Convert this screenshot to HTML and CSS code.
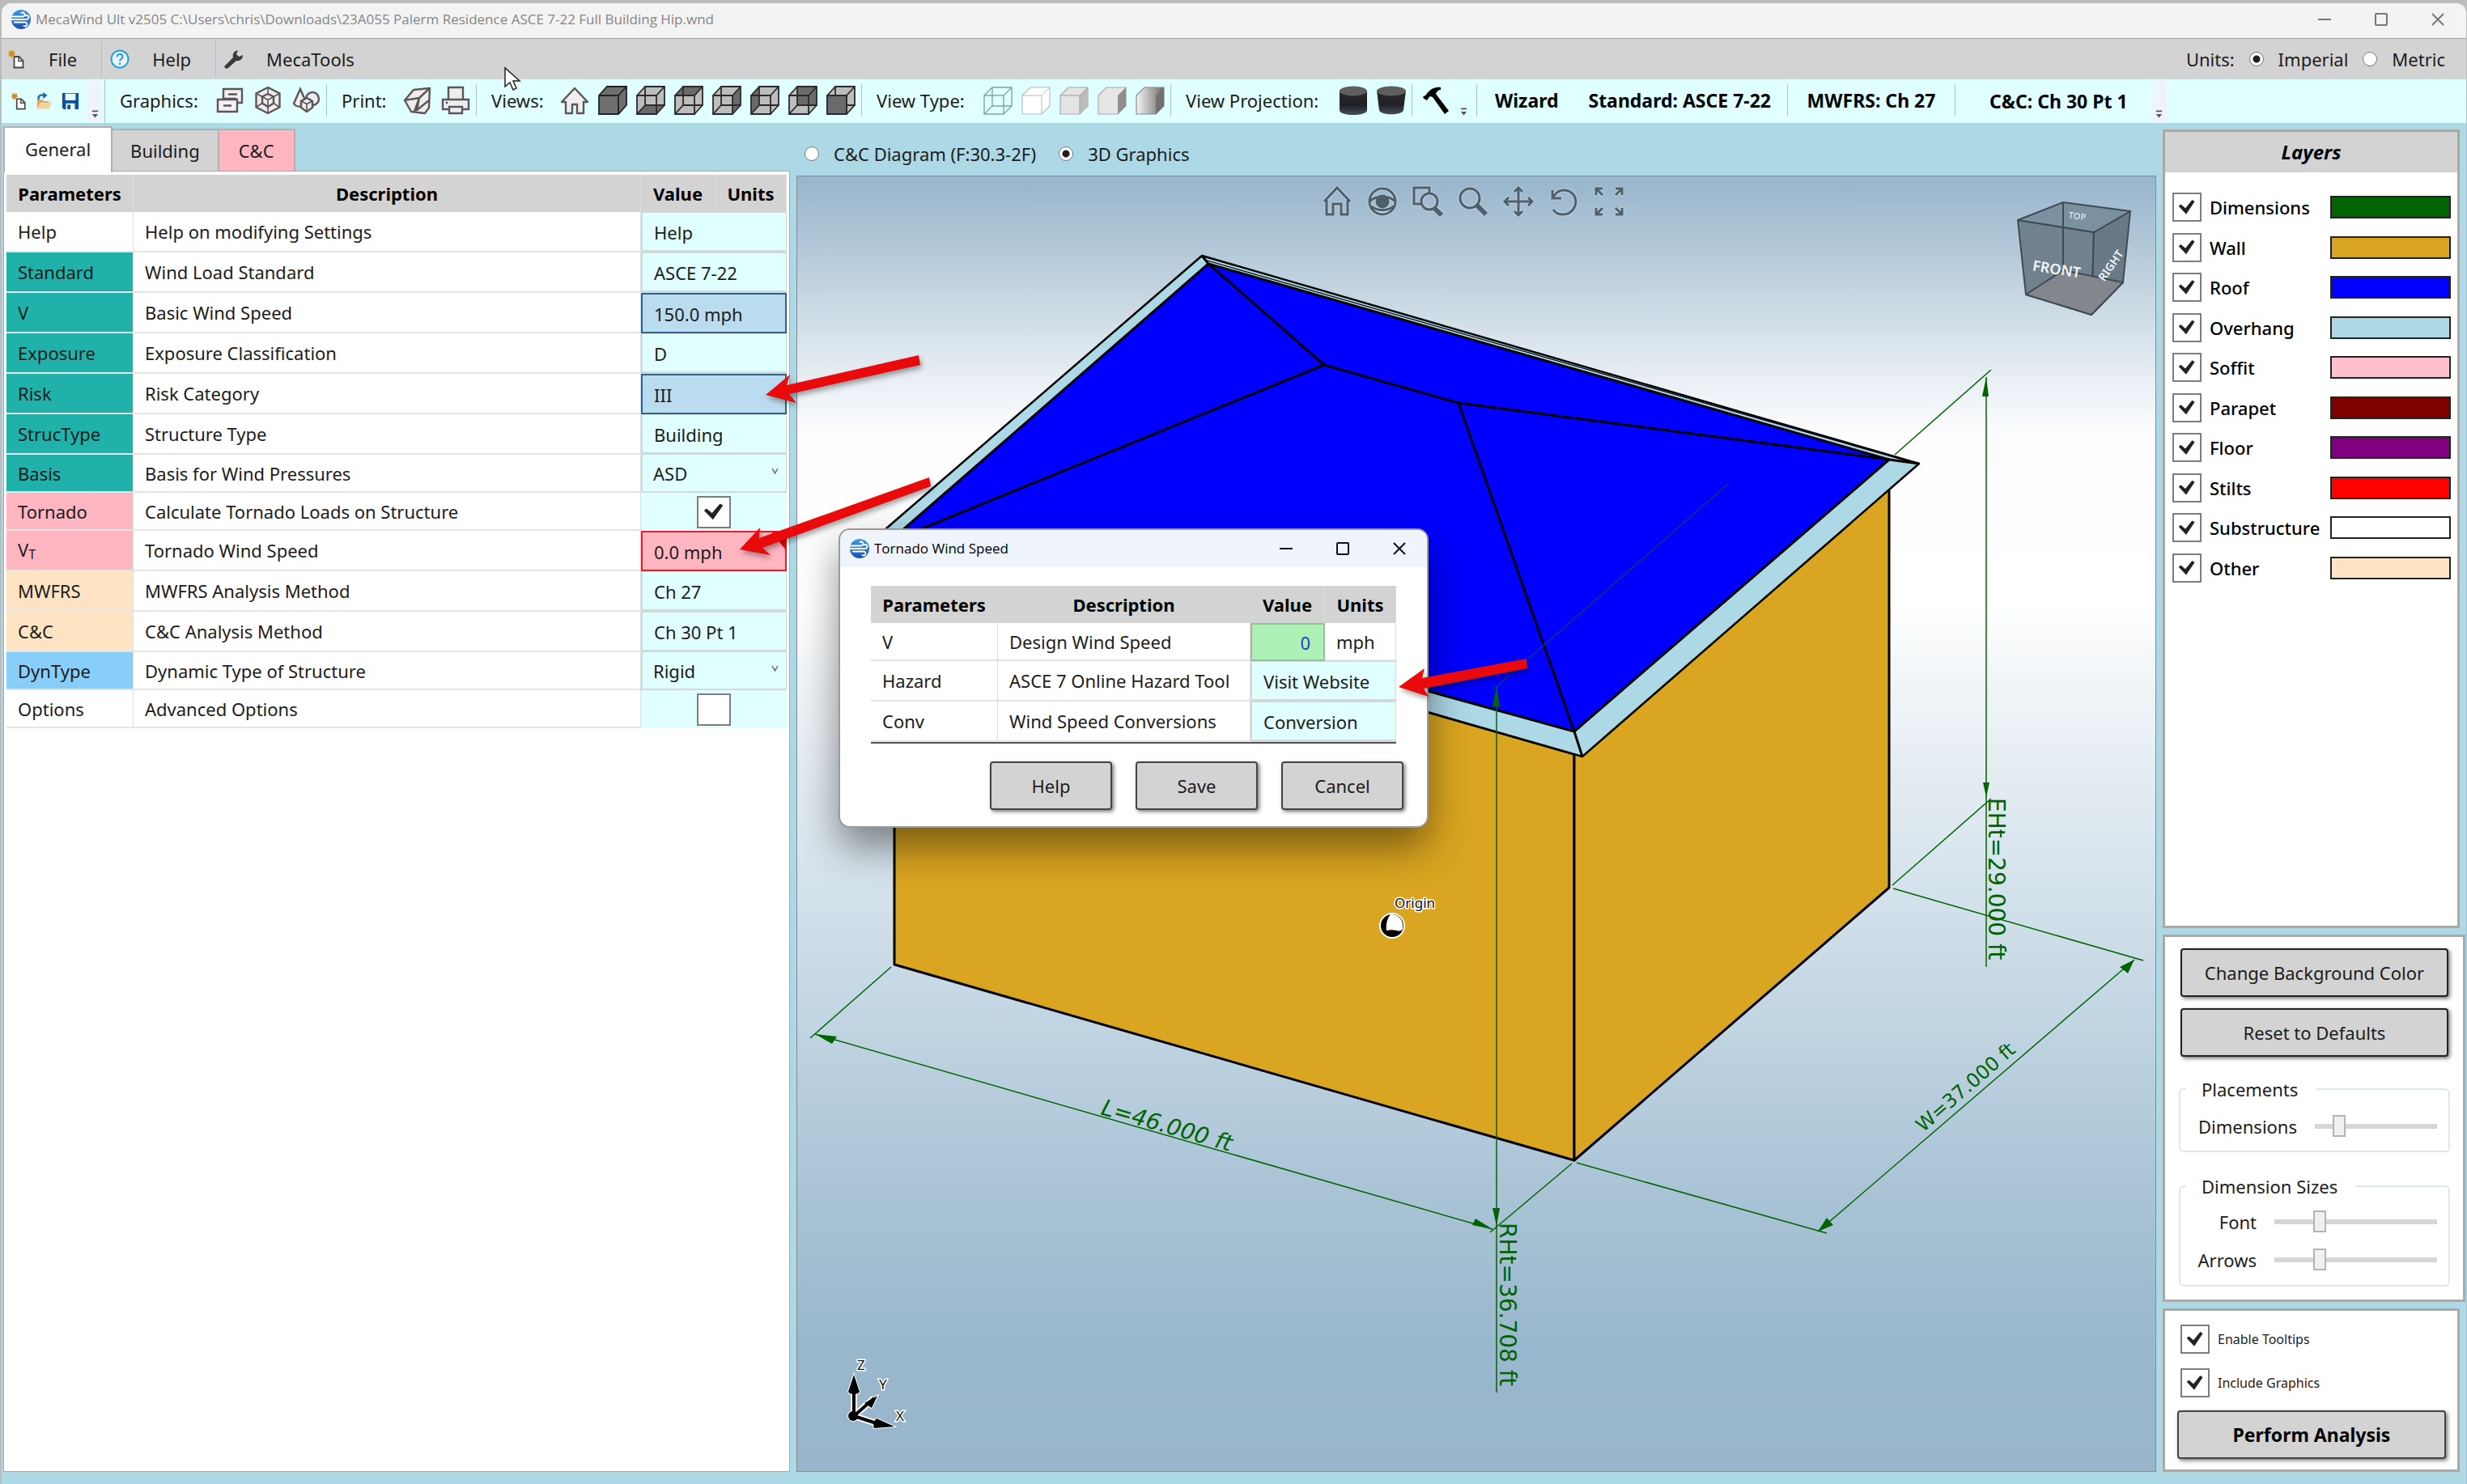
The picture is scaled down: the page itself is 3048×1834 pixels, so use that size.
FILE: index.html
```html
<!DOCTYPE html>
<html lang="en">
<head>
<meta charset="utf-8">
<title>MecaWind Ult v2505</title>
<link rel="stylesheet" href="styles.css">
</head>
<body>
<svg class="defs" aria-hidden="true">
  <defs>
    <linearGradient id="g-brand" x1="0" y1="0" x2="0" y2="1"><stop offset="0" stop-color="#3d9be0"/><stop offset="1" stop-color="#1c50b4"/></linearGradient>
    <linearGradient id="g-shade" x1="0" y1="0" x2="1" y2="0"><stop offset="0" stop-color="#f4f4f4"/><stop offset="1" stop-color="#6c6c6c"/></linearGradient>
    <linearGradient id="g-cyl" x1="0" y1="0" x2="0" y2="1"><stop offset="0" stop-color="#2a2a2a"/><stop offset=".6" stop-color="#1f2124"/><stop offset="1" stop-color="#45505b"/></linearGradient>
    <symbol id="brand" viewBox="0 0 24 24">
      <circle cx="12" cy="12" r="12" fill="url(#g-brand)"/>
      <path d="M0 8.500h14a2.500 2.500 0 1 0-2-4M0 12h19a2.500 2.500 0 1 0-2-4M3 15.500h14a2.500 2.500 0 1 1-2 4" fill="none" stroke="#fff" stroke-width="1.800"/>
    </symbol>
    <symbol id="new" viewBox="0 0 22 24">
      <path d="M8.500 9h6l5 5v8.500h-11z" fill="#fff" stroke="#444" stroke-width="1.800"/><path d="M14 9v5.500h5.500" fill="none" stroke="#444" stroke-width="1.500"/>
      <path d="M5.500 1v9M1 5.500h9M2.300 2.300l6.400 6.400M8.700 2.300l-6.400 6.400" stroke="#d18a23" stroke-width="1.700"/>
    </symbol>
    <symbol id="open" viewBox="0 0 24 24">
      <path d="M2 10h7l2 2h7v10H2z" fill="#dca861"/><path d="M2 22l4-8h16l-3 8z" fill="#f2d6a0"/>
      <path d="M4 10C3 5 6 3 11 4" fill="none" stroke="#1d69b3" stroke-width="2.600"/><path d="M10 0l6 4-6 5z" fill="#1d69b3"/>
    </symbol>
    <symbol id="save" viewBox="0 0 24 24">
      <path d="M1 1h22v22H3l-2-2z" fill="#0f5199"/><path d="M5 2h14v9H5zM6 15h12v8H6z" fill="#e9f6fb"/><path d="M8 17h4v6H8z" fill="#0f5199"/>
    </symbol>
    <symbol id="more" viewBox="0 0 10 12"><path d="M1 1h8v2H1zM1 6h8l-4 5z" fill="#555"/></symbol>
    <symbol id="stack" viewBox="0 0 36 36">
      <g fill="#f3eff2" stroke="#5b5759" stroke-width="2.400"><path d="M10 4h23v17h-8v-5H10z"/><path d="M3 17h24v15H3z"/><path d="M16 10.500h11M10 24.500h10"/></g>
    </symbol>
    <symbol id="boxhex" viewBox="0 0 36 36">
      <g fill="#eeecee" stroke="#5b5759" stroke-width="2.400"><path d="M18 2l14.500 7.500v17L18 34 3.500 26.500v-17z"/><path d="M18 10l7 3.500v8L18 26l-7-4.500v-8z"/><path d="M11 13.500l7 4 7-4M18 17.500V26M18 2v8M3.500 9.500l7.500 4M32.500 9.500l-7.500 4M18 26v8M3.500 26.500l7.500-5M32.500 26.500l-7.500-5" fill="none" stroke-width="1.600"/></g>
    </symbol>
    <symbol id="shapes" viewBox="0 0 36 36">
      <g fill="#eeecee" stroke="#5b5759" stroke-width="2.400"><circle cx="26" cy="16" r="8"/><path d="M11 4l8 18c-3 5-13 5-16 0z"/><path d="M19 15l7 4v8l-7 5-7-5v-8z"/><path d="M12 19l7 3.500 7-3.500M19 22.500V32" fill="none" stroke-width="1.600"/></g>
    </symbol>
    <symbol id="pbox" viewBox="0 0 36 36">
      <g fill="#eeecee" stroke="#5b5759" stroke-width="2.400" stroke-linejoin="round"><path d="M2 18L13 5l20-2-1 24-5 7-17-2z"/><path d="M2 18l18-3L33 3M20 15l-6 17M20 15l-3 15 15-12" fill="none"/></g>
    </symbol>
    <symbol id="printer" viewBox="0 0 36 36">
      <g fill="#eeecee" stroke="#5b5759" stroke-width="2.400"><path d="M9 2h18v16H9z"/><path d="M2 17h32v12H2z"/><path d="M10 26h16v8H10z"/></g><circle cx="7" cy="21" r="1.400" fill="#5b5759"/>
    </symbol>
    <symbol id="house" viewBox="0 0 36 36">
      <path d="M2 20L18 3l16 17h-5v14h-8V23h-6v11H7V20z" fill="#efedf0" stroke="#5b5759" stroke-width="2.400" stroke-linejoin="round"/>
    </symbol>
    <symbol id="wire" viewBox="0 0 36 36">
      <path d="M1 12h24v23H1zM11 1h24v23H11zM1 12L11 1M25 12L35 1M1 35l10-11M25 35l10-11" fill="none" stroke="#2a2a2a" stroke-width="1.800"/>
    </symbol>
    <symbol id="cube-bg" viewBox="0 0 36 36"><path d="M1 12L11 1h24v23L25 35H1z" fill="#bdbdbd"/></symbol>
  </defs>
</svg>

<div class="window">
  <header class="titlebar">
    <svg class="brand"><use href="#brand"/></svg>
    <h1 class="title">MecaWind Ult v2505 C:\Users\chris\Downloads\23A055 Palerm Residence ASCE 7-22 Full Building Hip.wnd</h1>
    <div class="winctl">
      <button type="button" aria-label="Minimize"><svg viewBox="0 0 16 16"><path d="M0 8h16"/></svg></button>
      <button type="button" aria-label="Maximize"><svg viewBox="0 0 16 16"><rect x="1" y="1" width="14" height="14" rx="1"/></svg></button>
      <button type="button" aria-label="Close"><svg viewBox="0 0 16 16"><path d="M1 1l14 14M15 1L1 15"/></svg></button>
    </div>
  </header>

  <nav class="menubar">
    <button type="button" class="menu"><svg class="ic24"><use href="#new"/></svg>File</button>
    <button type="button" class="menu"><svg class="ic24" viewBox="0 0 24 24"><circle cx="12" cy="12" r="10.500" fill="#e6f6fc" stroke="#2b9fd8" stroke-width="2"/><path d="M8.500 9.500c0-5 7.500-4.500 7 0-.3 2.200-3.500 2.500-3.500 5M12 16.500v2.500" fill="none" stroke="#2b9fd8" stroke-width="2.200"/></svg>Help</button>
    <button type="button" class="menu"><svg class="ic24" viewBox="0 0 24 24"><path d="M1 20L11 10c-1-4 1-8 6-9l-2 5 3 3 5-2c0 5-4 8-8 7L5 23c-3 2-6-1-4-3z" fill="#3b3b3b"/></svg>MecaTools</button>
    <div class="units">
      <span>Units:</span>
      <label><input type="radio" name="units" checked>Imperial</label>
      <label><input type="radio" name="units">Metric</label>
    </div>
  </nav>

  <div class="toolbar">
    <div class="tg tg-files">
      <button type="button" aria-label="New"><svg class="ic22"><use href="#new"/></svg></button>
      <button type="button" aria-label="Open"><svg class="ic22"><use href="#open"/></svg></button>
      <button type="button" aria-label="Save"><svg class="ic22"><use href="#save"/></svg></button>
      <span class="grip"><svg><use href="#more"/></svg></span>
    </div>
    <div class="tg"><span>Graphics:</span>
      <div class="icons">
        <button type="button" aria-label="Layers"><svg><use href="#stack"/></svg></button>
        <button type="button" aria-label="Box"><svg><use href="#boxhex"/></svg></button>
        <button type="button" aria-label="Shapes"><svg><use href="#shapes"/></svg></button>
      </div>
    </div>
    <div class="tg"><span>Print:</span>
      <div class="icons">
        <button type="button" aria-label="Print view"><svg><use href="#pbox"/></svg></button>
        <button type="button" aria-label="Print"><svg><use href="#printer"/></svg></button>
      </div>
    </div>
    <div class="tg tg-views"><span>Views:</span>
      <div class="icons">
        <button type="button" aria-label="Home"><svg><use href="#house"/></svg></button>
        <button type="button" aria-label="Isometric"><svg viewBox="0 0 36 36"><path d="M1 12L11 1h24v23L25 35H1z" fill="#6e6e6e" stroke="#222" stroke-width="1.800"/><path d="M1 12h24v23M25 12L35 1" fill="none" stroke="#222" stroke-width="1.800"/></svg></button>
        <button type="button" aria-label="Bottom"><svg viewBox="0 0 36 36"><use href="#cube-bg"/><path d="M1 35l10-11h24L25 35z" fill="#6a6a6a"/><use href="#wire"/></svg></button>
        <button type="button" aria-label="Top"><svg viewBox="0 0 36 36"><use href="#cube-bg"/><path d="M1 12L11 1h24L25 12z" fill="#6a6a6a"/><use href="#wire"/></svg></button>
        <button type="button" aria-label="Right"><svg viewBox="0 0 36 36"><use href="#cube-bg"/><path d="M25 12L35 1v23L25 35z" fill="#6a6a6a"/><use href="#wire"/></svg></button>
        <button type="button" aria-label="Left"><svg viewBox="0 0 36 36"><use href="#cube-bg"/><path d="M1 12L11 1v23L1 35z" fill="#6a6a6a"/><use href="#wire"/></svg></button>
        <button type="button" aria-label="Back"><svg viewBox="0 0 36 36"><use href="#cube-bg"/><path d="M11 1h24v23H11z" fill="#6a6a6a"/><use href="#wire"/></svg></button>
        <button type="button" aria-label="Front"><svg viewBox="0 0 36 36"><use href="#cube-bg"/><use href="#wire"/><path d="M1 12h24v23H1z" fill="#6a6a6a" stroke="#2a2a2a" stroke-width="1.800"/></svg></button>
      </div>
    </div>
    <div class="tg"><span>View Type:</span>
      <div class="icons">
        <button type="button" aria-label="Wireframe"><svg viewBox="0 0 36 36"><path d="M1 12h24v23H1zM11 2h24v23H11zM1 12L11 2M25 12L35 2M1 35l10-10M25 35l10-10" fill="none" stroke="#7fa6a0" stroke-width="1.400"/></svg></button>
        <button type="button" aria-label="Hidden line"><svg viewBox="0 0 36 36"><path d="M1 12L11 2h24v23L25 35H1z" fill="#fff" stroke="#b4bcbc" stroke-width="1.200"/><path d="M1 12h24v23M25 12L35 2" fill="none" stroke="#b4bcbc"/></svg></button>
        <button type="button" aria-label="Flat"><svg viewBox="0 0 36 36"><path d="M1 12L11 2h24v23L25 35H1z" fill="#e4e4e4" stroke="#a8a8a8" stroke-width="1.200"/><path d="M25 12L35 2v23L25 35z" fill="#bcbcbc"/><path d="M1 12h24v23M25 12L35 2" fill="none" stroke="#a0a0a0"/></svg></button>
        <button type="button" aria-label="Shaded"><svg viewBox="0 0 36 36"><path d="M1 12L11 2h24v23L25 35H1z" fill="#e6e6e6" stroke="#a8a8a8" stroke-width="1.200"/><path d="M25 12L35 2v23L25 35z" fill="#8e8e8e"/></svg></button>
        <button type="button" aria-label="Rendered"><svg viewBox="0 0 36 36"><path d="M1 12L11 2h24v23L25 35H1z" fill="url(#g-shade)" stroke="#8a8a8a" stroke-width="1.200"/><path d="M25 12L35 2v23L25 35z" fill="#707070"/></svg></button>
      </div>
    </div>
    <div class="tg"><span>View Projection:</span>
      <div class="icons">
        <button type="button" aria-label="Parallel"><svg viewBox="0 0 36 36"><path d="M1 6v24c0 8 34 8 34 0V6z" fill="url(#g-cyl)"/><ellipse cx="18" cy="6.500" rx="17" ry="6" fill="#5e5e5e"/></svg></button>
        <button type="button" aria-label="Perspective"><svg viewBox="0 0 36 36"><path d="M0 6l3 24c1 7 29 7 30 0l3-24z" fill="url(#g-cyl)"/><ellipse cx="18" cy="6.500" rx="18" ry="6" fill="#5e5e5e"/></svg></button>
      </div>
    </div>
    <div class="tg tg-tool">
      <button type="button" aria-label="Tools"><svg viewBox="0 0 36 36"><path d="M1 14c1-2 3-1 4-3C9 5 15 1 23 2v3c-3 0-5 2-6 5l16 21-5 4L13 14l-3-1c-2 1-2 3-4 5-2-1-4-2-5-4z" fill="#000"/></svg></button>
      <span class="drop"><svg><use href="#more"/></svg></span>
    </div>
    <div class="tg tg-status"><strong>Wizard</strong><strong>Standard: ASCE 7-22</strong></div>
    <div class="tg tg-center"><strong>MWFRS: Ch 27</strong></div>
    <div class="tg tg-last"><strong>C&amp;C: Ch 30 Pt 1</strong><span class="grip"><svg><use href="#more"/></svg></span></div>
  </div>

  <main class="workspace">
    <section class="settings">
      <div class="tabs" role="tablist">
        <button type="button" role="tab" class="tab on">General</button><button type="button" role="tab" class="tab">Building</button><button type="button" role="tab" class="tab alert">C&amp;C</button>
      </div>
      <div class="sheet">
        <table class="params">
          <colgroup><col class="c-name"><col><col class="c-val"><col class="c-unit"></colgroup>
          <thead><tr><th>Parameters</th><th>Description</th><th>Value</th><th>Units</th></tr></thead>
          <tbody>
            <tr><td>Help</td><td>Help on modifying Settings</td><td colspan="2" class="v"><button type="button">Help</button></td></tr>
            <tr><td class="teal">Standard</td><td>Wind Load Standard</td><td colspan="2" class="v"><button type="button">ASCE 7-22</button></td></tr>
            <tr><td class="teal">V</td><td>Basic Wind Speed</td><td colspan="2" class="v"><button type="button" class="sel">150.0 mph</button></td></tr>
            <tr><td class="teal">Exposure</td><td>Exposure Classification</td><td colspan="2" class="v"><button type="button">D</button></td></tr>
            <tr><td class="teal">Risk</td><td>Risk Category</td><td colspan="2" class="v"><button type="button" class="sel">III</button></td></tr>
            <tr><td class="teal">StrucType</td><td>Structure Type</td><td colspan="2" class="v"><button type="button">Building</button></td></tr>
            <tr class="short"><td class="teal">Basis</td><td><label for="basis">Basis for Wind Pressures</label></td><td colspan="2" class="v"><div class="pick"><select id="basis"><option>ASD</option><option>LRFD</option></select><svg viewBox="0 0 8 8"><path d="M1 1l3 5 3-5"/></svg></div></td></tr>
            <tr class="short"><td class="pink">Tornado</td><td><label for="tornado">Calculate Tornado Loads on Structure</label></td><td colspan="2" class="v tick"><input type="checkbox" id="tornado" checked></td></tr>
            <tr><td class="pink">V<small>T</small></td><td>Tornado Wind Speed</td><td colspan="2" class="v"><button type="button" class="bad">0.0 mph</button></td></tr>
            <tr><td class="bisque">MWFRS</td><td>MWFRS Analysis Method</td><td colspan="2" class="v"><button type="button">Ch 27</button></td></tr>
            <tr><td class="bisque">C&amp;C</td><td>C&amp;C Analysis Method</td><td colspan="2" class="v"><button type="button">Ch 30 Pt 1</button></td></tr>
            <tr class="short"><td class="sky">DynType</td><td><label for="dyn">Dynamic Type of Structure</label></td><td colspan="2" class="v"><div class="pick"><select id="dyn"><option>Rigid</option><option>Flexible</option></select><svg viewBox="0 0 8 8"><path d="M1 1l3 5 3-5"/></svg></div></td></tr>
            <tr class="short"><td>Options</td><td><label for="adv">Advanced Options</label></td><td colspan="2" class="v tick"><input type="checkbox" id="adv"></td></tr>
          </tbody>
        </table>
      </div>
    </section>

    <section class="view">
      <div class="modes">
        <label><input type="radio" name="mode">C&amp;C Diagram (F:30.3-2F)</label>
        <label><input type="radio" name="mode" checked>3D Graphics</label>
      </div>
      <div class="stage">
        <svg class="scene" viewBox="984 217 1680 1600" role="img" aria-label="3D model">
          <!-- walls, overhang and roof -->
          <g stroke="#000" stroke-width="3" stroke-linejoin="round">
            <path d="M1105 690L1945 931V1433L1105 1191z" fill="#daa520"/>
            <path d="M1945 931L2334 590V1096L1945 1433z" fill="#daa520"/>
            <path d="M1485 315L2371 572 1955 934 1065 678z" fill="#add8e6" stroke-width="2.500"/>
            <path d="M1493 325L2334 567 1945 903 1098 669z" fill="#00f"/>
            <path d="M1493 325L1636 450 1802 497 2334 567M1636 450L1098 669M1802 497L1945 903 1955 934M1485 315l8 10M2334 567l37 5" fill="none"/>
            <path d="M1488 320L2371 573" fill="none" stroke-width="1.200"/>
          </g>
          <!-- dimension lines -->
          <g stroke="#006400" stroke-width="1.500" fill="none">
            <path d="M1007 1277L1844 1518M1101 1194L1001 1282M1942 1437L1841 1522"/>
            <path d="M1849 847V1720M2246 1521L2637 1185M1948 1436L2257 1523M2339 1097L2648 1186"/>
            <path d="M2454 465V1194M2460 456L2341 561M2338 1093L2460 986"/>
            <path d="M1845 851L2135 597" stroke="#063e6a"/>
          </g>
          <g fill="#006400">
            <path d="M1007 1277l27 3-6 9zM1844 1518l-21-13 -4 8zM1849 847l-5 25h9zM1849 1514l-5-22h9z"/>
            <path d="M2246 1521l11-17 8 9zM2637 1185l-18 9 10 8zM2454 465l-5 24h8zM2454 984l-4-18h8z"/>
          </g>
          <g class="dims">
            <text transform="translate(1359 1376) rotate(16)" class="slant">L=46.000 ft</text>
            <text transform="translate(2376 1399) rotate(-41)" class="mid">W=37.000 ft</text>
            <text transform="translate(2457 985) rotate(90)">EHt=29.000 ft</text>
            <text transform="translate(1853 1510) rotate(90)">RHt=36.708 ft</text>
          </g>
          <!-- origin marker -->
          <circle cx="1720" cy="1143" r="15" fill="#000" stroke="#fff" stroke-width="2"/>
          <path d="M1718 1129c10-1 17 8 15 18-2 3-5 3-7 2-5-1-9-1-13 0-1-8 1-15 5-20z" fill="#fff"/>
          <text x="1723" y="1121" class="halo">Origin</text>
          <!-- axis triad -->
          <g stroke="#fff" stroke-width="8" fill="none"><path d="M1055 1749v-30M1055 1749l25-22M1055 1749l28 9"/></g>
          <g fill="#000" stroke="#fff" stroke-width="2" paint-order="stroke">
            <path d="M1055 1698l7 21c-2 4-12 4-14 0zM1105 1762l-25 2c-2-4 1-11 3-12zM1084 1724l-7 15-9-6z"/><circle cx="1054" cy="1749" r="6"/>
          </g>
          <path d="M1055 1749v-30M1055 1749l25-22M1055 1749l28 9" stroke="#000" stroke-width="4"/>
          <g class="halo"><text x="1059" y="1692">Z</text><text x="1086" y="1716">Y</text><text x="1107" y="1755">X</text></g>
          <!-- view cube -->
          <g stroke="#3f4b53" stroke-width="2" stroke-linejoin="round">
            <path d="M2493 271L2587 286 2584 388 2503 363z" fill="#71828e"/>
            <path d="M2587 286L2632 260 2623 348 2584 388z" fill="#697a86"/>
            <path d="M2493 271L2549 249 2632 260 2587 286z" fill="#7b919f"/>
            <path d="M2503 363L2549 333 2623 348 2584 388z" fill="#83868f"/>
            <path d="M2549 249V333" fill="none"/>
          </g>
          <g class="cube"><text transform="translate(2540 338) rotate(9)">FRONT</text><text transform="translate(2612 330) rotate(-55)" class="side">RIGHT</text><text transform="translate(2566 270) rotate(8)" class="top">TOP</text></g>
        </svg>

        <div class="nav">
          <button type="button" aria-label="Home view"><svg viewBox="0 0 36 36"><path d="M2 18L18 1l16 17M5 16v18h8V21h10v13h8V16"/></svg></button>
          <button type="button" aria-label="Look"><svg viewBox="0 0 36 36"><circle cx="18" cy="18" r="16"/><path d="M2 18c8-8 24-8 32 0M4 24c8 6 20 6 28 0"/><circle cx="18" cy="18" r="7" class="solid"/></svg></button>
          <button type="button" aria-label="Zoom window"><svg viewBox="0 0 36 36"><path d="M20 8V1H1v20h10"/><circle cx="20" cy="18" r="10"/><path d="M26 26l9 9" class="bold"/></svg></button>
          <button type="button" aria-label="Zoom"><svg viewBox="0 0 36 36"><circle cx="14" cy="14" r="12"/><path d="M23 23l11 11" class="bold"/></svg></button>
          <button type="button" aria-label="Pan"><svg viewBox="0 0 36 36"><path d="M18 1v34M1 18h34M13 6l5-5 5 5M13 30l5 5 5-5M6 13l-5 5 5 5M30 13l5 5-5 5"/></svg></button>
          <button type="button" aria-label="Rotate"><svg viewBox="0 0 36 36"><path d="M4 4v10h11M5 13C10 2 24 1 31 11c6 12-4 24-15 23-6 0-9-3-11-6"/></svg></button>
          <button type="button" aria-label="Fit"><svg viewBox="0 0 36 36"><path d="M2 10V2h8M2 2l8 8M26 2h8v8M34 2l-8 8M2 26v8h8M2 34l8-8M34 26v8h-8M34 34l-8-8"/></svg></button>
        </div>

        <section class="dialog" role="dialog" aria-label="Tornado Wind Speed">
          <header>
            <svg class="brand"><use href="#brand"/></svg>
            <h2>Tornado Wind Speed</h2>
            <div class="winctl">
              <button type="button" aria-label="Minimize"><svg viewBox="0 0 16 16"><path d="M0 8h16"/></svg></button>
              <button type="button" aria-label="Maximize"><svg viewBox="0 0 16 16"><rect x="1" y="1" width="14" height="14" rx="1"/></svg></button>
              <button type="button" aria-label="Close"><svg viewBox="0 0 16 16"><path d="M1 1l14 14M15 1L1 15"/></svg></button>
            </div>
          </header>
          <table class="params">
            <colgroup><col class="c-name"><col><col class="c-val"><col class="c-unit"></colgroup>
            <thead><tr><th>Parameters</th><th>Description</th><th>Value</th><th>Units</th></tr></thead>
            <tbody>
              <tr class="short"><td>V</td><td><label for="speed">Design Wind Speed</label></td><td class="v"><input type="text" id="speed" value="0"></td><td class="unit">mph</td></tr>
              <tr><td>Hazard</td><td>ASCE 7 Online Hazard Tool</td><td colspan="2" class="v"><button type="button">Visit Website</button></td></tr>
              <tr><td>Conv</td><td>Wind Speed Conversions</td><td colspan="2" class="v"><button type="button">Conversion</button></td></tr>
            </tbody>
          </table>
          <div class="actions"><button type="button" class="btn">Help</button><button type="button" class="btn">Save</button><button type="button" class="btn">Cancel</button></div>
        </section>
      </div>
    </section>

    <aside class="side">
      <section class="panel layers">
        <h2>Layers</h2>
        <ul>
          <li><label><input type="checkbox" checked>Dimensions</label><button type="button" class="swatch dimc" aria-label="Dimensions color"></button></li>
          <li><label><input type="checkbox" checked>Wall</label><button type="button" class="swatch wall" aria-label="Wall color"></button></li>
          <li><label><input type="checkbox" checked>Roof</label><button type="button" class="swatch roof" aria-label="Roof color"></button></li>
          <li><label><input type="checkbox" checked>Overhang</label><button type="button" class="swatch over" aria-label="Overhang color"></button></li>
          <li><label><input type="checkbox" checked>Soffit</label><button type="button" class="swatch soffit" aria-label="Soffit color"></button></li>
          <li><label><input type="checkbox" checked>Parapet</label><button type="button" class="swatch parapet" aria-label="Parapet color"></button></li>
          <li><label><input type="checkbox" checked>Floor</label><button type="button" class="swatch floor" aria-label="Floor color"></button></li>
          <li><label><input type="checkbox" checked>Stilts</label><button type="button" class="swatch stilts" aria-label="Stilts color"></button></li>
          <li><label><input type="checkbox" checked>Substructure</label><button type="button" class="swatch sub" aria-label="Substructure color"></button></li>
          <li><label><input type="checkbox" checked>Other</label><button type="button" class="swatch other" aria-label="Other color"></button></li>
        </ul>
      </section>
      <section class="panel options">
        <button type="button" class="btn">Change Background Color</button>
        <button type="button" class="btn">Reset to Defaults</button>
        <fieldset class="place">
          <legend>Placements</legend>
          <div class="slide"><label for="s-dim">Dimensions</label><input type="range" id="s-dim" value="16"></div>
        </fieldset>
        <fieldset class="sizes">
          <legend>Dimension Sizes</legend>
          <div class="slide"><label for="s-font">Font</label><input type="range" id="s-font" value="26"></div>
          <div class="slide"><label for="s-arr">Arrows</label><input type="range" id="s-arr" value="26"></div>
        </fieldset>
      </section>
      <section class="panel run">
        <label><input type="checkbox" checked>Enable Tooltips</label>
        <label><input type="checkbox" checked>Include Graphics</label>
        <button type="button" class="btn">Perform Analysis</button>
      </section>
    </aside>
  </main>
</div>

<!-- callout arrows and pointer, above everything -->
<svg class="callouts" viewBox="0 0 3048 1834" aria-hidden="true">
  <path d="M953 657h18v23z" fill="#f00"/>
  <g fill="#e90b0b" class="drop-shadow">
    <path d="M946 488L976 463 972 476 1135 439 1137 451 975 487 984 498z"/>
    <path d="M914 679L939 652 938 665 1148 590 1150 601 942 677 952 686z"/>
    <path d="M1728 849L1760 826 1757 838 1886 814 1887 826 1759 851 1765 861z"/>
  </g>
  <path d="M624 84v23l6-5 4 9 4-2-4-9h8z" fill="#fff" stroke="#222" stroke-width="1.500"/>
</svg>
</body>
</html>
```
FILE: styles.css
```css
* { box-sizing: border-box; }
body { margin: 0; background: #bcbcbc; font: 22px/28px "Noto Sans", "Open Sans", sans-serif; color: #1c1c1c; }
button, input, select { font: inherit; color: inherit; margin: 0; }
button { border: 0; padding: 0; background: none; }
h1, h2, ul { margin: 0; padding: 0; font-weight: 400; list-style: none; }
.defs { position: absolute; width: 0; height: 0; }

.window { display: flex; flex-direction: column; min-height: calc(100vh - 4px); margin: 4px 1px 0 2px; border-radius: 12px 12px 0 0; background: #add8e6; overflow: hidden; }

/* title bar */
.titlebar { display: flex; align-items: center; height: 44px; padding: 0 27px 4px 12px; gap: 6px; background: #f3f3f3; border-bottom: 1px solid #a6a6a6; }
.title { font: 17px/24px "Open Sans", sans-serif; color: #868686; }
.brand { width: 24px; height: 24px; flex: none; }
.winctl { display: flex; gap: 54px; margin-left: auto; }
.winctl svg { display: block; width: 16px; height: 16px; fill: none; stroke: #777; stroke-width: 2; }

/* menu */
.menubar { display: flex; align-items: center; height: 50px; padding: 2px 26px 2px 0; background: #d3d3d3; }
.menu { display: flex; align-items: center; gap: 28px; height: 45px; padding: 0 30px 0 10px; border-right: 1px solid #b7b9c4; }
.menu:nth-child(1) { padding-left: 6px; }
.menu:nth-child(3) { border: 0; }
.ic24 { width: 24px; height: 24px; }
.ic22 { width: 22px; height: 22px; }
.units { display: flex; gap: 18px; margin-left: auto; }
label { display: inline-flex; align-items: center; }
input[type="radio"] { appearance: none; width: 18px; height: 18px; margin-right: 18px; border: 1px solid #777; border-radius: 50%; background: #fff; }
input[type="radio"]:checked { background: radial-gradient(circle, #1e1e1e 4px, #fff 5px); }

/* toolbar */
.toolbar { display: grid; grid-template-columns: 128px 274px 185px 476px 382px 298px 80px 384px 207px 1fr; height: 54px; background: #e0ffff; }
.tg { display: flex; align-items: center; justify-content: space-between; margin: 6px 0 8px; padding: 0 7px 0 18px; border-right: 1px solid #b3bfc8; white-space: nowrap; }
.tg svg { display: block; width: 36px; height: 36px; }
.icons { display: flex; gap: 11px; }
.tg .ic22 { width: 22px; height: 22px; }
.tg-files { margin: 0; padding: 0 4px 0 10px; border: 0; box-shadow: inset -1px 0 #b3bfc8; }
.grip { display: flex; align-items: flex-end; justify-content: center; width: 18px; height: 52px; padding-bottom: 4px; background: #eef3fc; }
.tg .grip svg, .tg .drop svg { width: 9px; height: 12px; }
.tg-tool { padding: 0 11px 0 12px; }
.drop { align-self: flex-end; }
.tg-status { padding: 0 20px 0 22px; }
.tg-center { justify-content: center; padding: 0; }
.tg-last { justify-content: flex-start; gap: 30px; margin: 0; padding: 0 0 0 42px; border: 0; }
strong { font-size: 23px; font-weight: 700; color: #000; }

/* workspace */
.workspace { flex: 1; display: grid; grid-template-columns: minmax(0, 972fr) minmax(0, 1680fr) 374px; column-gap: 8px; padding: 4px 1px 15px 2px; }
.settings { display: flex; flex-direction: column; }
.tabs { display: flex; align-items: flex-end; height: 55px; }
.tab { height: 52px; padding: 0 22px; background: #d3d3d3; border: 2px solid #b0b0b0; border-bottom: 0; border-left-width: 0; }
.tab.on { height: 57px; padding: 0 25px 4px; margin-bottom: -2px; background: #fff; border-left-width: 2px; z-index: 1; }
.tab.alert { padding: 0 24px; background: #ffb6c1; }
.sheet { flex: 1; padding: 4px 3px; background: #fff; border: 1px solid #a9a9a9; }

.params { width: 100%; table-layout: fixed; border-collapse: separate; border-spacing: 0; }
.c-name { width: 157px; }
.c-val { width: 92px; }
.c-unit { width: 88px; }
.params th { height: 46px; padding: 0; background: #d3d3d3; font-weight: 700; color: #000; border-right: 1px solid #dcdcdc; }
.params td { height: 50px; padding: 0 14px; border-right: 1px solid #dedede; border-bottom: 2px solid #e4e4e4; white-space: nowrap; }
.params .short td { height: 47px; }
.params td.v { padding: 0; background: #e0ffff; border: 0; }
.v button { display: block; width: 100%; height: 50px; padding: 2px 14px 0; text-align: left; border: 2px solid #d3d8d8; border-width: 1px 1px 3px 2px; }
.v .sel { background: #bbdcee; border: 2px solid #2c628b; }
.v .bad { background: #ffb6c1; border: 2px solid #e0202c; }
.pick { position: relative; height: 47px; border: 2px solid #d3d8d8; border-width: 0 1px 2px 2px; }
.pick select { appearance: none; width: 100%; height: 100%; padding: 0 13px; background: none; border: 0; }
.pick svg { position: absolute; right: 9px; top: 16px; width: 9px; height: 9px; fill: none; stroke: #777; stroke-width: 1.500; }
.teal { background: #20b2aa; }
.pink { background: #ffb6c1; }
.bisque { background: #ffe4c4; }
.sky { background: #87cefa; }
small { font-size: 16px; vertical-align: -3px; line-height: 20px; }
input[type="checkbox"] { appearance: none; display: grid; flex: none; width: 36px; height: 36px; border: 2px solid #7d7d7d; background: #fff; }
input[type="checkbox"]:checked::after { content: ""; background: #222; clip-path: polygon(18% 46%, 26% 39%, 44% 54%, 70% 22%, 80% 28%, 47% 77%); }
.tick input[type="checkbox"] { width: 42px; height: 40px; margin: 0 auto; }

/* viewport */
.view { display: flex; flex-direction: column; }
.modes { display: flex; gap: 28px; height: 61px; padding: 8px 0 0 10px; }
.modes label { height: 52px; }
.stage { position: relative; flex: 1; border: 1px solid #7e8c96; background: linear-gradient(#98b5cc 0%, #b5cad9 6%, #dbe5ed 13%, #fdfdfe 20%, #fff 33%, #f1f5f8 39%, #cddde8 59%, #aac4d6 78%, #9ab8cd 90%, #98b5cb 100%); }
.scene { position: absolute; inset: -1px; width: calc(100% + 2px); height: calc(100% + 2px); }
.dims text { font: 28px "DejaVu Sans", sans-serif; fill: #006400; }
.dims .slant { font-style: italic; }
.dims .mid { font-size: 24px; }
.halo { font-size: 17px; fill: #111; stroke: #fff; stroke-width: 3px; paint-order: stroke; }
.cube text { fill: #f2f5f7; font-size: 18px; font-weight: 600; text-anchor: middle; }
.cube .side { font-size: 14px; }
.cube .top { font-size: 11px; opacity: .8; }
.nav { position: relative; display: flex; justify-content: center; gap: 20px; padding: 13px 8px 0 0; }
.nav svg { display: block; width: 36px; height: 36px; overflow: visible; fill: none; stroke: #4c5f6b; stroke-width: 3; filter: drop-shadow(0 0 1px #dfe9f0); }
.nav .solid { fill: #4c5f6b; }
.nav .bold { stroke-width: 6; }

/* dialog */
.dialog { position: absolute; left: 51px; top: 435px; width: 729px; border: 2px solid #9a9a9a; border-radius: 14px; background: #fff; overflow: hidden; box-shadow: 0 24px 50px rgba(0, 0, 0, .45); }
.dialog header { display: flex; align-items: center; gap: 6px; height: 46px; padding: 0 26px 0 12px; background: #eff3fa; }
.dialog h2 { font: 17px/24px "Open Sans", sans-serif; color: #000; }
.dialog .winctl svg { stroke: #111; }
.dialog .params { width: 649px; margin: 23px 0 0 38px; border-bottom: 2px solid #555; }
.unit { background: #fff; }
.v input[type="text"] { display: block; width: 100%; height: 47px; padding: 0 16px; text-align: right; color: #1f3fd0; background: #aef1b6; border: 2px solid #a0b8a4; border-radius: 0; }
.actions { display: flex; justify-content: flex-end; gap: 29px; padding: 22px 29px 20px; }
.btn { height: 60px; background: #d3d3d3; border: 2px solid #444; border-radius: 4px; box-shadow: 2px 2px 5px rgba(0, 0, 0, .55); }
.actions .btn { width: 151px; }

/* right column */
.side { display: flex; flex-direction: column; gap: 8px; padding-top: 4px; }
.panel { background: #fff; border: 3px solid #a9a9a9; margin-right: 7px; }
.layers { flex: 1; }
.layers h2 { height: 50px; background: #d3d3d3; text-align: center; font: italic 700 24px/50px "Open Sans", sans-serif; color: #000; }
.layers ul { display: flex; flex-direction: column; justify-content: space-between; height: 482px; margin: 25px 8px 0 9px; }
.layers li { display: flex; align-items: center; justify-content: space-between; }
.layers label { gap: 10px; color: #000; font-weight: 500; }
.swatch { width: 149px; height: 28px; border: 2px solid #222; }
.dimc { background: #006400; }
.wall { background: #daa520; }
.roof { background: #00f; }
.over { background: #add8e6; }
.soffit { background: #ffc0cb; }
.parapet { background: #800000; }
.floor { background: #800080; }
.stilts { background: #f00; }
.sub { background: #fff; }
.other { background: #ffe4c4; }
.options { margin-right: 0; padding: 14px 16px 16px 17px; }
.options .btn { display: block; width: 331px; margin: 0 0 14px 2px; border-color: #222; }
fieldset { margin: 0; padding: 0 14px; border: 2px solid #dfe7ec; border-radius: 6px; }
legend { margin-left: -7px; padding: 0 22px 0 19px; line-height: 28px; }
.place { margin-top: 26px; height: 92px; }
.sizes { margin-top: 28px; height: 138px; }
.slide { display: grid; grid-template-columns: 130px 1fr; align-items: center; gap: 22px; height: 47px; }
.sizes .slide { grid-template-columns: 80px 1fr; }
.slide label { justify-content: flex-end; }
.place .slide { margin-top: 8px; }
.sizes .slide:first-of-type { margin-top: 6px; }
input[type="range"] { appearance: none; width: 100%; height: 28px; background: linear-gradient(#d6d6d6, #d6d6d6) center / 100% 6px no-repeat; }
input[type="range"]::-webkit-slider-thumb { appearance: none; width: 16px; height: 27px; background: #f0f0f0; border: 2px solid #b4b4b4; }
.run { padding: 17px 14px 13px 15px; }
.run label { display: flex; gap: 10px; margin: 0 0 18px 4px; font-size: 16px; }
.run .btn { display: block; width: 100%; margin-top: -2px; font-size: 23px; font-weight: 700; color: #000; }

.callouts { position: absolute; left: 0; top: 0; width: 100%; pointer-events: none; }
.drop-shadow { filter: drop-shadow(2px 4px 3px rgba(0, 0, 0, .35)); }
```
